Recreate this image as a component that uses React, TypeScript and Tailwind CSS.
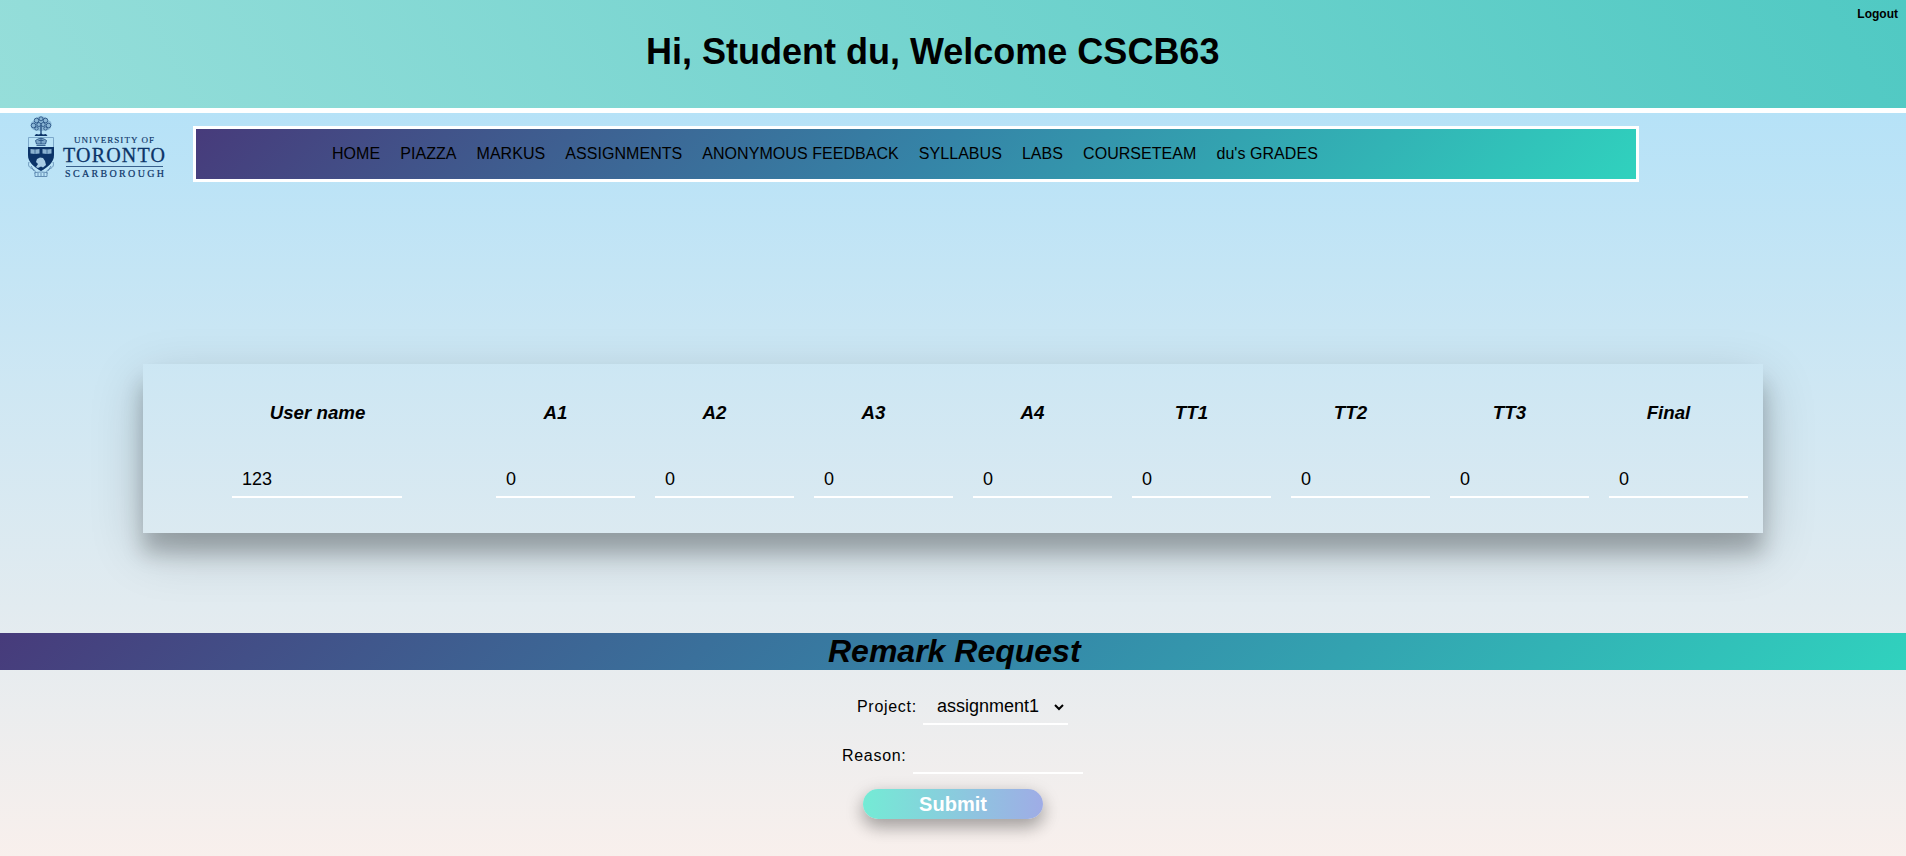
const links = ["HOME", "PIAZZA", "MARKUS", "ASSIGNMENTS", "ANONYMOUS FEEDBACK", "SYLLABUS", "LABS", "COURSETEAM", "du's GRADES"];
const marks = ["A1", "A2", "A3", "A4", "TT1", "TT2", "TT3", "Final"];

function Logo() {
  return (
    <svg className="ml-6 mt-[1px] block h-[66px] w-[150px] shrink-0" viewBox="24 114 150 66" fill="#0c3468">
      <path d="M31 127c-1-4 1-6 3-6 0-3 3-4.500 7-4.500s6.500 1.500 7 4c3 0 4.500 3 3 6 0 3-3 4.500-6 3.500-2 1.500-6 1.500-8 0-3 .5-5.500-.5-6-3z" fill="#6d9abf" fillOpacity=".6" />
      <g fill="none" stroke="#2a5686" strokeWidth=".9">
        <circle cx="33.500" cy="125.500" r="2.300" />
        <circle cx="36.500" cy="120.500" r="2.300" />
        <circle cx="41" cy="118.800" r="2" />
        <circle cx="45.500" cy="120.500" r="2.300" />
        <circle cx="48.500" cy="125.500" r="2.300" />
        <circle cx="38.800" cy="124.500" r="2" />
        <circle cx="43.200" cy="124.500" r="2" />
        <circle cx="36.500" cy="128.500" r="1.700" />
        <circle cx="45.500" cy="128.500" r="1.700" />
        <path d="M41 126v8" strokeWidth="1.500" />
      </g>
      <path d="M34.500 136l1.500-2 3 .5 2-1 2 1 3-.5 1.500 2z" />
      <path d="M28.500 137.500h25v18c0 7-7 12-12.500 15-5.500-3-12.500-8-12.500-15z" fill="none" stroke="#6d9abf" strokeWidth=".8" />
      <path d="M28 147h26v8c0 7-6 12-13 16-7-4-13-9-13-16z" />
      <path d="M36.500 144l-1-3.500 2.500-1.500 3-.8 3 .8 2.500 1.500-1 3.500z" fill="#7aa5c8" stroke="#2a5686" strokeWidth=".9" />
      <path d="M41 138v6M38.500 140.500l5 0M36.500 145.500h9" stroke="#2a5686" strokeWidth=".9" />
      <path d="M30.500 149l4.500.5 4.500-.5v4.500l-4.500.5-4.500-.5zM42.500 149l4.500.5 4.500-.5v4.500l-4.500.5-4.500-.5z" fill="#8bb2d0" />
      <path d="M35 149.500v4.500M47 149.500v4.500" stroke="#2a5686" strokeWidth=".7" />
      <path d="M37 159l3-1.500 3 .5 2 3 1 4-3 2.500-2-1-3 1.500-2-1 2-3-2-2z" fill="#a8cce4" />
      <path d="M29 162c-1.500 4 1 6 3.500 7s3.500 2.500 2 4.500M53 162c1.500 4-1 6-3.500 7s-3.500 2.500-2 4.500M31 166l3 5M51 166l-3 5M35 176.500v-4l6-.5 6 .5v4zM38 173v3M41 173v3M44 173v3" fill="none" stroke="#5a86ae" strokeWidth=".9" />
      <rect x="66" y="166" width="97" height="1" fillOpacity=".75" />
      <g fontFamily="Liberation Serif, serif">
        <text x="74" y="142.500" fontSize="9" textLength="80" stroke="#0c3468" strokeWidth=".15">UNIVERSITY OF</text>
        <text x="63" y="161.500" fontSize="20" textLength="102" stroke="#0c3468" strokeWidth=".3">TORONTO</text>
        <text x="65" y="176.500" fontSize="10" textLength="99" stroke="#0c3468" strokeWidth=".2">SCARBOROUGH</text>
      </g>
    </svg>
  );
}

export default function App() {
  return (
    <div className="h-[856px] overflow-hidden bg-[linear-gradient(to_top,#fff1eb_0%,#ace0f9_100%)] bg-[length:100%_935px] bg-no-repeat font-['Liberation_Sans',sans-serif] text-black">
      <header className="relative h-[113px] border-b-[5px] border-white bg-[linear-gradient(60deg,#96deda_0%,#50c9c3_100%)] bg-origin-border">
        <h1 className="ml-[646px] pt-[31px] text-[36px] leading-[42px] font-bold whitespace-nowrap">Hi, Student du, Welcome CSCB63</h1>
        <a className="absolute top-[6px] right-[8px] text-[12px] leading-4 font-bold">Logout</a>
      </header>

      <div className="flex h-[251px] items-start">
        <Logo />
        <nav className="mt-[13px] ml-[19px] flex h-[56px] w-[1446px] items-center gap-[20px] border-[3px] border-white bg-[linear-gradient(135deg,#473B7B_0%,#3584A7_51%,#30D2BE_100%)] pl-[136px] text-[16px] tracking-[0.05px] whitespace-nowrap">
          {links.map((l) => (
            <a key={l}>{l}</a>
          ))}
        </nav>
      </div>

      <section className="ml-[143px] h-[169px] w-[1620px] pl-4 shadow-[0_20px_20px_0_rgba(0,0,0,0.22),0_17px_50px_0_rgba(0,0,0,0.19)]">
        <div className="grid grid-cols-[317px_repeat(8,159px)] pt-[38px] text-center text-[18.72px] leading-[22px] font-bold italic">
          <span>User name</span>
          {marks.map((m) => (
            <span key={m}>{m}</span>
          ))}
        </div>
        <div className="mt-[34px] grid grid-cols-[317px_repeat(8,159px)] text-[18px] leading-[43px]">
          <div className="ml-[73px] h-[40px] w-[170px] border-b-2 border-white pl-[10px]">123</div>
          {marks.map((m) => (
            <div key={m} className="ml-5 h-[40px] border-b-2 border-white pl-[10px]">0</div>
          ))}
        </div>
      </section>

      <h2 className="mt-[100px] h-[37px] bg-[linear-gradient(135deg,#473B7B_0%,#3584A7_51%,#30D2BE_100%)] pl-[828px] text-[32px] leading-[37px] font-bold italic">Remark Request</h2>

      <form className="flex flex-col">
        <div className="ml-[857px] flex h-[55px] pt-[17px] text-[16px] tracking-[0.7px]">
          <span className="w-[66px] leading-[40px]">Project:</span>
          <div className="flex h-[38px] w-[145px] items-center border-b-2 border-white pt-[3px] pl-[14px] text-[18px] tracking-normal">
            <span className="w-[117px]">assignment1</span>
            <svg className="h-[8px] w-[10px]" viewBox="0 0 10 8" fill="none" stroke="black" strokeWidth="2">
              <path d="M1 2l4 4 4-4" />
            </svg>
          </div>
        </div>
        <div className="ml-[842px] flex h-[49px] pt-[11px] text-[16px] tracking-[0.7px]">
          <span className="w-[71px] leading-[40px]">Reason:</span>
          <div className="h-[38px] w-[170px] border-b-2 border-white" />
        </div>
        <button type="button" className="mt-[15px] ml-[863px] h-[30px] w-[180px] rounded-full bg-[linear-gradient(90deg,#74ebd5_0%,#9face6_100%)] text-[20px] leading-[30px] font-bold text-white shadow-[0_8px_16px_0_rgba(0,0,0,0.2),0_6px_20px_0_rgba(0,0,0,0.19)]">
          Submit
        </button>
      </form>
    </div>
  );
}
